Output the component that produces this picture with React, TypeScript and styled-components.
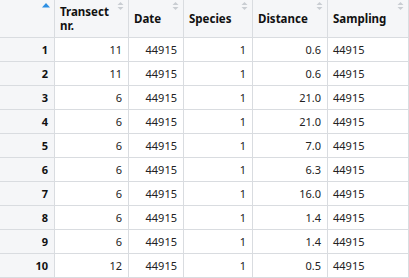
import React from 'react';
import styled, { createGlobalStyle } from 'styled-components';

// --- Types / data ---
interface Row {
  transect: number;
  date: number;
  species: number;
  distance: string;
  sampling: string;
}

const rows: Row[] = [
  { transect: 11, date: 44915, species: 1, distance: '0.6', sampling: '44915' },
  { transect: 11, date: 44915, species: 1, distance: '0.6', sampling: '44915' },
  { transect: 6, date: 44915, species: 1, distance: '21.0', sampling: '44915' },
  { transect: 6, date: 44915, species: 1, distance: '21.0', sampling: '44915' },
  { transect: 6, date: 44915, species: 1, distance: '7.0', sampling: '44915' },
  { transect: 6, date: 44915, species: 1, distance: '6.3', sampling: '44915' },
  { transect: 6, date: 44915, species: 1, distance: '16.0', sampling: '44915' },
  { transect: 6, date: 44915, species: 1, distance: '1.4', sampling: '44915' },
  { transect: 6, date: 44915, species: 1, distance: '1.4', sampling: '44915' },
  { transect: 12, date: 44915, species: 1, distance: '0.5', sampling: '44915' },
];

const columns = [
  { label: 'Transect nr.', width: 74 },
  { label: 'Date', width: 55 },
  { label: 'Species', width: 69 },
  { label: 'Distance', width: 75 },
  { label: 'Sampling', width: 81 },
];

// --- Styles ---
const GlobalStyle = createGlobalStyle`
  * { box-sizing: border-box; }
  body {
    margin: 0;
    background: #fff;
    font-family: "Noto Sans", "Open Sans", Arial, sans-serif;
    color: #222;
  }
`;

const Table = styled.table`
  border-collapse: separate;
  border-spacing: 0;
  table-layout: fixed;
  width: 409px;
`;

const HeadCell = styled.th<{ $index?: boolean }>`
  position: relative;
  height: 38px;
  padding: 0 16px 0 5px;
  background: #f5f6f8;
  border-right: 1px solid #d9dce0;
  border-bottom: 1px solid #d9dce0;
  text-align: left;
  vertical-align: middle;
  font-size: 11.5px;
  font-weight: 700;
  line-height: 14px;
  color: #111;
`;

const SortIcon = styled.svg`
  position: absolute;
  top: 2px;
  right: 4px;
`;

const Cell = styled.td<{ $align?: 'left' | 'right' }>`
  height: 24px;
  padding: 0 6px 0 5px;
  border-right: 1px solid #d9dce0;
  border-bottom: 1px solid #d9dce0;
  text-align: ${p => p.$align || 'right'};
  font-size: 11px;
  color: #222;
  white-space: nowrap;
`;

const IndexCell = styled(Cell)`
  background: #f5f6f8;
  font-weight: 700;
  color: #111;
`;

const SortBoth = () => (
  <SortIcon width="7" height="8" viewBox="0 0 7 8">
    <path d="M3.5 0 L6.5 3 L0.5 3 Z" fill="#c9cdd2" />
    <path d="M3.5 8 L6.5 5 L0.5 5 Z" fill="#c9cdd2" />
  </SortIcon>
);

const SortAsc = () => (
  <SortIcon width="8" height="8" viewBox="0 0 8 8" style={{ top: 3 }}>
    <path d="M4 0 L8 4.5 L0 4.5 Z" fill="#2d8fe3" />
  </SortIcon>
);

export default function App() {
  return (
    <>
      <GlobalStyle />
      <Table>
        <colgroup>
          <col style={{ width: 55 }} />
          {columns.map(c => (
            <col key={c.label} style={{ width: c.width }} />
          ))}
        </colgroup>
        <thead>
          <tr>
            <HeadCell $index>
              <SortAsc />
            </HeadCell>
            {columns.map(c => (
              <HeadCell key={c.label}>
                {c.label}
                <SortBoth />
              </HeadCell>
            ))}
          </tr>
        </thead>
        <tbody>
          {rows.map((r, i) => (
            <tr key={i}>
              <IndexCell>{i + 1}</IndexCell>
              <Cell>{r.transect}</Cell>
              <Cell>{r.date}</Cell>
              <Cell>{r.species}</Cell>
              <Cell>{r.distance}</Cell>
              <Cell $align="left">{r.sampling}</Cell>
            </tr>
          ))}
        </tbody>
      </Table>
    </>
  );
}
